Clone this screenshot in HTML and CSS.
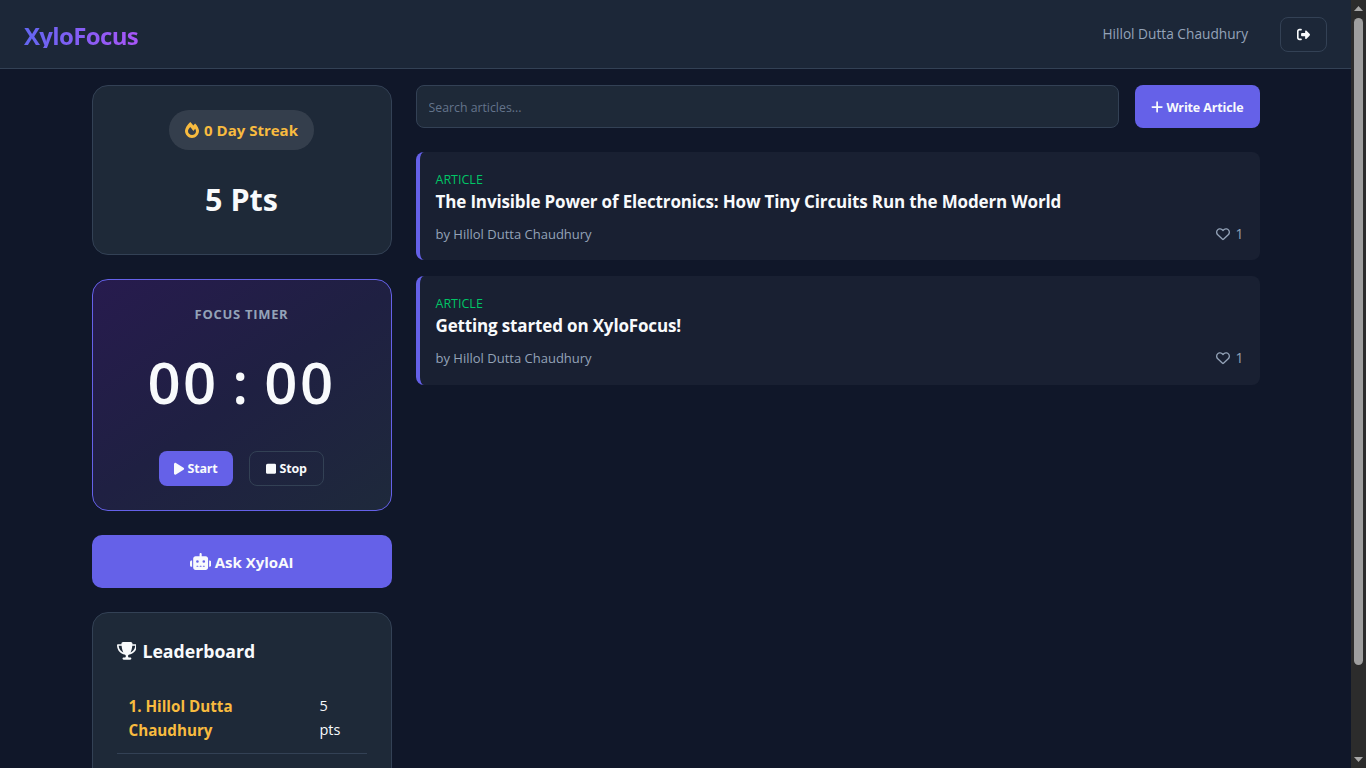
FILE: index.html
```html
<!DOCTYPE html>
<html lang="en">
<head>
    <meta charset="UTF-8">
    <meta name="viewport" content="width=device-width, initial-scale=1.0">
    <title>XyloFocus</title>
    <link rel="stylesheet" href="styles.css">
</head>
<body>
    <header class="navbar">
        <div class="brand">XyloFocus</div>
        <div class="nav-user">
            <span class="user-name">Hillol Dutta Chaudhury</span>
            <button class="logout-btn" type="button" aria-label="Log out">
                <svg class="icon" viewBox="0 0 512 512"><path d="M502.6 278.6c12.5-12.5 12.5-32.8 0-45.3l-128-128c-9.2-9.2-22.9-11.9-34.9-6.9s-19.8 16.6-19.8 29.6l0 72-128 0c-17.7 0-32 14.3-32 32l0 64c0 17.7 14.3 32 32 32l128 0 0 72c0 12.9 7.8 24.6 19.8 29.6s25.7 2.2 34.9-6.9l128-128zM160 96c17.7 0 32-14.3 32-32s-14.3-32-32-32L96 32C43 32 0 75 0 128L0 384c0 53 43 96 96 96l64 0c17.7 0 32-14.3 32-32s-14.3-32-32-32l-64 0c-17.7 0-32-14.3-32-32l0-256c0-17.7 14.3-32 32-32l64 0z"></path></svg>
            </button>
        </div>
    </header>

    <div class="layout">
        <aside class="sidebar">
            <section class="card stats-card">
                <div class="streak">
                    <svg class="icon" viewBox="0 0 448 512"><path d="M323.56 51.2c-20.8 19.3-39.58 39.59-56.22 59.97C240.08 73.62 206.28 35.53 168 0 69.78 91.12 0 209.84 0 281.6 0 408.65 100.29 512 224 512s224-103.35 224-230.4c0-53.36-51.98-163.42-124.44-230.4zm-19.47 340.65C282.43 407.01 255.72 416 226.86 416 154.71 416 96 368.26 96 290.75c0-38.61 24.31-72.63 72.79-130.75 6.93 7.98 98.83 125.34 98.83 125.34l58.63-66.88c4.14 6.85 7.91 13.55 11.27 19.97 27.35 52.19 15.81 118.97-33.43 153.42z"></path></svg>
                    <span>0 Day Streak</span>
                </div>
                <div class="points">5 Pts</div>
            </section>

            <section class="card timer-card">
                <div class="timer-label">FOCUS TIMER</div>
                <div class="timer-value">00 : 00</div>
                <div class="timer-actions">
                    <button class="btn btn-primary" type="button">
                        <svg class="icon" viewBox="0 0 384 512"><path d="M73 39c-14.8-9.1-33.4-9.4-48.5-.9S0 62.6 0 80V432c0 17.4 9.4 33.4 24.5 41.9s33.7 8.1 48.5-.9L361 297c14.3-8.7 23-24.2 23-41s-8.7-32.2-23-41L73 39z"></path></svg>
                        Start
                    </button>
                    <button class="btn btn-outline" type="button">
                        <svg class="icon" viewBox="0 0 384 512"><path d="M0 128C0 92.7 28.7 64 64 64H320c35.3 0 64 28.7 64 64V384c0 35.3-28.7 64-64 64H64c-35.3 0-64-28.7-64-64V128z"></path></svg>
                        Stop
                    </button>
                </div>
            </section>

            <button class="ask-btn" type="button">
                <svg class="icon" viewBox="0 0 640 512"><path d="M320 0c17.7 0 32 14.3 32 32V96H472c39.8 0 72 32.2 72 72V440c0 39.8-32.2 72-72 72H168c-39.8 0-72-32.2-72-72V168c0-39.8 32.2-72 72-72H288V32c0-17.7 14.3-32 32-32zM208 384c-8.8 0-16 7.2-16 16s7.2 16 16 16h32c8.8 0 16-7.2 16-16s-7.2-16-16-16H208zm96 0c-8.8 0-16 7.2-16 16s7.2 16 16 16h32c8.8 0 16-7.2 16-16s-7.2-16-16-16H304zm96 0c-8.8 0-16 7.2-16 16s7.2 16 16 16h32c8.8 0 16-7.2 16-16s-7.2-16-16-16H400zM264 256a40 40 0 1 0 -80 0 40 40 0 1 0 80 0zm152 40a40 40 0 1 0 0-80 40 40 0 1 0 0 80zM48 224H64V416H48c-26.5 0-48-21.5-48-48V272c0-26.5 21.5-48 48-48zm544 0c26.5 0 48 21.5 48 48v96c0 26.5-21.5 48-48 48H576V224h16z"></path></svg>
                Ask XyloAI
            </button>

            <section class="card leaderboard">
                <h3>
                    <svg class="icon" viewBox="0 0 576 512"><path d="M400 0H176c-26.5 0-48.1 21.8-47.1 48.2c.2 5.3 .4 10.6 .7 15.8H24C10.7 64 0 74.7 0 88c0 92.6 33.5 157 78.5 200.7c44.3 43.1 98.3 64.8 138.1 75.8c23.4 6.5 39.4 26 39.4 45.6c0 20.9-17 37.9-37.9 37.9H192c-17.7 0-32 14.3-32 32s14.3 32 32 32H384c17.7 0 32-14.3 32-32s-14.3-32-32-32H357.9C337 448 320 431 320 410.1c0-19.6 15.9-39.2 39.4-45.6c39.9-11 93.9-32.7 138.2-75.8C542.5 245 576 180.6 576 88c0-13.3-10.7-24-24-24H446.4c.3-5.2 .5-10.4 .7-15.8C448.1 21.8 426.5 0 400 0zM48.9 112h84.4c9.1 90.1 29.2 150.3 51.9 190.6c-24.9-11-50.8-26.5-73.2-48.3c-32-31.1-58-76-63-142.3zM464.1 254.3c-22.4 21.8-48.3 37.3-73.2 48.3c22.7-40.3 42.8-100.5 51.9-190.6h84.4c-5.1 66.3-31.1 111.2-63 142.3z"></path></svg>
                    Leaderboard
                </h3>
                <table class="rank-table">
                    <tr>
                        <td class="rank-name">1. Hillol Dutta Chaudhury</td>
                        <td class="rank-pts">5 pts</td>
                    </tr>
                </table>
            </section>
        </aside>

        <main class="feed">
            <div class="feed-top">
                <input class="search" type="text" placeholder="Search articles...">
                <button class="write-btn" type="button">
                    <svg class="icon" viewBox="0 0 448 512"><path d="M256 80c0-17.7-14.3-32-32-32s-32 14.3-32 32V224H48c-17.7 0-32 14.3-32 32s14.3 32 32 32H192V432c0 17.7 14.3 32 32 32s32-14.3 32-32V288H400c17.7 0 32-14.3 32-32s-14.3-32-32-32H256V80z"></path></svg>
                    Write Article
                </button>
            </div>

            <article class="post">
                <div class="post-tag">ARTICLE</div>
                <h2>The Invisible Power of Electronics: How Tiny Circuits Run the Modern World</h2>
                <div class="post-meta">
                    <span>by Hillol Dutta Chaudhury</span>
                    <span class="likes">
                        <svg class="icon" viewBox="0 0 512 512"><path d="M225.8 468.2l-2.5-2.3L48.1 303.2C17.4 274.7 0 234.7 0 192.8v-3.3c0-70.4 50-130.8 119.2-144C158.6 37.9 198.9 47 231 69.6c9 6.4 17.4 13.8 25 22.3c4.2-4.8 8.7-9.2 13.5-13.3c3.7-3.2 7.5-6.2 11.5-9c0 0 0 0 0 0C313.1 47 353.4 37.9 392.8 45.4C462 58.6 512 119.1 512 189.5v3.3c0 41.9-17.4 81.9-48.1 110.4L288.7 465.9l-2.5 2.3c-8.2 7.6-19 11.9-30.2 11.9s-22-4.2-30.2-11.9zM239.1 145c-.4-.3-.7-.7-1-1.1l-17.8-20c0 0-.1-.1-.1-.1c0 0 0 0 0 0c-23.1-25.9-58-37.7-92-31.2C81.6 101.5 48 142.1 48 189.5v3.3c0 28.5 11.9 55.8 32.8 75.2L256 430.7 431.2 268c20.9-19.4 32.8-46.7 32.8-75.2v-3.3c0-47.3-33.6-88-80.1-96.9c-34-6.5-69 5.4-92 31.2c0 0 0 0-.1 .1s0 0-.1 .1l-17.8 20c-.3 .4-.7 .7-1 1.1c-4.5 4.5-10.6 7-16.9 7s-12.4-2.5-16.9-7z"></path></svg>
                        1
                    </span>
                </div>
            </article>

            <article class="post">
                <div class="post-tag">ARTICLE</div>
                <h2>Getting started on XyloFocus!</h2>
                <div class="post-meta">
                    <span>by Hillol Dutta Chaudhury</span>
                    <span class="likes">
                        <svg class="icon" viewBox="0 0 512 512"><path d="M225.8 468.2l-2.5-2.3L48.1 303.2C17.4 274.7 0 234.7 0 192.8v-3.3c0-70.4 50-130.8 119.2-144C158.6 37.9 198.9 47 231 69.6c9 6.4 17.4 13.8 25 22.3c4.2-4.8 8.7-9.2 13.5-13.3c3.7-3.2 7.5-6.2 11.5-9c0 0 0 0 0 0C313.1 47 353.4 37.9 392.8 45.4C462 58.6 512 119.1 512 189.5v3.3c0 41.9-17.4 81.9-48.1 110.4L288.7 465.9l-2.5 2.3c-8.2 7.6-19 11.9-30.2 11.9s-22-4.2-30.2-11.9zM239.1 145c-.4-.3-.7-.7-1-1.1l-17.8-20c0 0-.1-.1-.1-.1c0 0 0 0 0 0c-23.1-25.9-58-37.7-92-31.2C81.6 101.5 48 142.1 48 189.5v3.3c0 28.5 11.9 55.8 32.8 75.2L256 430.7 431.2 268c20.9-19.4 32.8-46.7 32.8-75.2v-3.3c0-47.3-33.6-88-80.1-96.9c-34-6.5-69 5.4-92 31.2c0 0 0 0-.1 .1s0 0-.1 .1l-17.8 20c-.3 .4-.7 .7-1 1.1c-4.5 4.5-10.6 7-16.9 7s-12.4-2.5-16.9-7z"></path></svg>
                        1
                    </span>
                </div>
            </article>
        </main>
    </div>

    <div class="scrollbar" aria-hidden="true">
        <svg class="scroll-arrow" viewBox="0 0 9 5"><path d="M4.5 0L9 5H0z"></path></svg>
        <div class="scroll-track"><div class="scroll-thumb"></div></div>
        <svg class="scroll-arrow" viewBox="0 0 9 5"><path d="M0 0H9L4.5 5z"></path></svg>
    </div>
</body>
</html>
```

FILE: styles.css
```css
/* General Styles */
body {
    margin: 0;
    padding-right: 15px;
    background: #101729;
    color: #f8fafc;
    font-family: 'Open Sans', 'Noto Sans', sans-serif;
    font-size: 15px;
    line-height: 24px;
}

button {
    font-family: inherit;
    cursor: pointer;
}

.icon {
    fill: currentColor;
    height: 1em;
    width: auto;
    flex-shrink: 0;
}

/* Window scrollbar, the browser hides its own here */
.scrollbar {
    position: fixed;
    top: 0;
    right: 0;
    bottom: 0;
    box-sizing: border-box;
    display: flex;
    flex-direction: column;
    align-items: center;
    width: 15px;
    padding: 6px 0;
    background: #2c2c2c;
}

.scroll-arrow {
    width: 9px;
    height: 5px;
    fill: #a8a8a8;
    flex-shrink: 0;
}

.scroll-track {
    flex: 1;
    margin: 7px 0;
}

.scroll-thumb {
    width: 9px;
    height: 647px;
    background: #9f9f9f;
    border-radius: 5px;
}

/* Navbar */
.navbar {
    display: flex;
    justify-content: space-between;
    align-items: center;
    height: 68px;
    padding: 0 24px;
    background: #1c2738;
    border-bottom: 1px solid #334155;
}

.brand {
    padding-top: 3px;
    font-size: 24px;
    font-weight: 700;
    letter-spacing: -0.65px;
    background: linear-gradient(90deg, #6366f1, #a855f7);
    -webkit-background-clip: text;
    background-clip: text;
    color: transparent;
}

.nav-user {
    display: flex;
    align-items: center;
    gap: 32px;
}

.user-name {
    color: #94a3b8;
    font-size: 13.7px;
}

.logout-btn {
    display: flex;
    align-items: center;
    justify-content: center;
    width: 47px;
    height: 35px;
    background: transparent;
    border: 1px solid #334155;
    border-radius: 8px;
    color: #f8fafc;
    font-size: 13px;
}

/* Page layout */
.layout {
    display: grid;
    grid-template-columns: 300px 1fr;
    gap: 24px;
    width: 1168px;
    margin: 0 auto;
    padding: 16px 0;
}

.sidebar {
    display: flex;
    flex-direction: column;
    gap: 24px;
}

.card {
    box-sizing: border-box;
    background: #1e2938;
    border: 1px solid #334155;
    border-radius: 16px;
}

/* Streak card */
.stats-card {
    display: flex;
    flex-direction: column;
    align-items: center;
    height: 170px;
    padding-top: 24px;
}

.streak {
    display: flex;
    align-items: center;
    gap: 5px;
    height: 40px;
    padding: 0 16px;
    background: rgba(255, 255, 255, 0.1);
    border-radius: 20px;
    color: #f8bb3f;
    font-size: 15px;
    font-weight: 700;
}

.streak .icon {
    font-size: 16px;
}

.points {
    margin-top: 27px;
    font-size: 30.5px;
    line-height: 44px;
    font-weight: 700;
}

/* Focus timer */
.timer-card {
    height: 232px;
    padding-top: 22px;
    text-align: center;
    background: linear-gradient(145deg, #271b4e 0%, #1f2042 50%, #1e293b 100%);
    border-color: #6561e8;
}

.timer-label {
    color: #94a3b8;
    font-size: 13px;
    font-weight: 700;
    letter-spacing: 0.7px;
}

.timer-value {
    margin-top: 18px;
    font-size: 58px;
    line-height: 76px;
    font-weight: 600;
    letter-spacing: 2.5px;
    word-spacing: -4px;
}

.timer-actions {
    display: flex;
    justify-content: center;
    gap: 16px;
    margin-top: 31px;
}

.btn {
    display: flex;
    align-items: center;
    justify-content: center;
    gap: 3px;
    height: 35px;
    padding-top: 1px;
    border-radius: 8px;
    color: #f8fafc;
    font-size: 12.5px;
    font-weight: 700;
    letter-spacing: -0.2px;
}

.btn .icon {
    font-size: 13.5px;
}

.btn-primary {
    width: 74px;
    background: #6561e8;
    border: none;
}

.btn-outline {
    width: 75px;
    background: transparent;
    border: 1px solid #334155;
}

.ask-btn {
    display: flex;
    align-items: center;
    justify-content: center;
    gap: 4px;
    height: 53px;
    background: #6561e8;
    border: none;
    border-radius: 10px;
    color: #f8fafc;
    font-size: 15px;
    font-weight: 700;
}

.ask-btn .icon {
    font-size: 17px;
}

/* Leaderboard */
.leaderboard {
    height: 241px;
    padding: 24px;
}

.leaderboard h3 {
    display: flex;
    align-items: center;
    gap: 6px;
    margin: 0 0 16px;
    font-size: 17.7px;
    line-height: 28px;
    font-weight: 700;
}

.rank-table {
    width: 100%;
    border-collapse: collapse;
}

.rank-table td {
    padding: 13px 12px 11px;
    border-bottom: 1px solid #334155;
}

.rank-name {
    color: #f8bb3f;
    font-weight: 700;
    font-size: 15.2px;
}

.rank-table .rank-pts {
    width: 23px;
    padding-right: 24px;
    font-size: 14.5px;
}

/* Article feed */
.feed-top {
    display: flex;
    gap: 16px;
    margin-bottom: 24px;
}

.search {
    flex: 1;
    box-sizing: border-box;
    height: 43px;
    padding: 2px 12px 0;
    background: #1e2938;
    border: 1px solid #334155;
    border-radius: 8px;
    color: #f8fafc;
    font-family: inherit;
    font-size: 12.3px;
}

.search::placeholder {
    color: #64748b;
}

.write-btn {
    display: flex;
    align-items: center;
    gap: 3px;
    height: 43px;
    padding: 1px 16px 0;
    background: #6561e8;
    border: none;
    border-radius: 8px;
    color: #f8fafc;
    font-size: 12.5px;
    font-weight: 700;
    letter-spacing: -0.13px;
}

.write-btn .icon {
    font-size: 14px;
}

.post {
    box-sizing: border-box;
    height: 108.4px;
    margin-bottom: 16px;
    padding: 16px 16px 0;
    background: #192032;
    border-left: 4px solid #6561e8;
    border-radius: 8px;
}

.post-tag {
    color: #00c566;
    font-size: 12.5px;
    line-height: 24px;
    height: 24px;
}

.post h2 {
    margin: -4px 0 0;
    font-size: 17px;
    line-height: 28px;
    font-weight: 700;
    letter-spacing: -0.15px;
}

.post-meta {
    display: flex;
    justify-content: space-between;
    align-items: center;
    margin-top: 6px;
    color: #94a3b8;
    font-size: 13px;
}

.likes {
    display: flex;
    align-items: center;
    gap: 5px;
    font-size: 14px;
}
```
